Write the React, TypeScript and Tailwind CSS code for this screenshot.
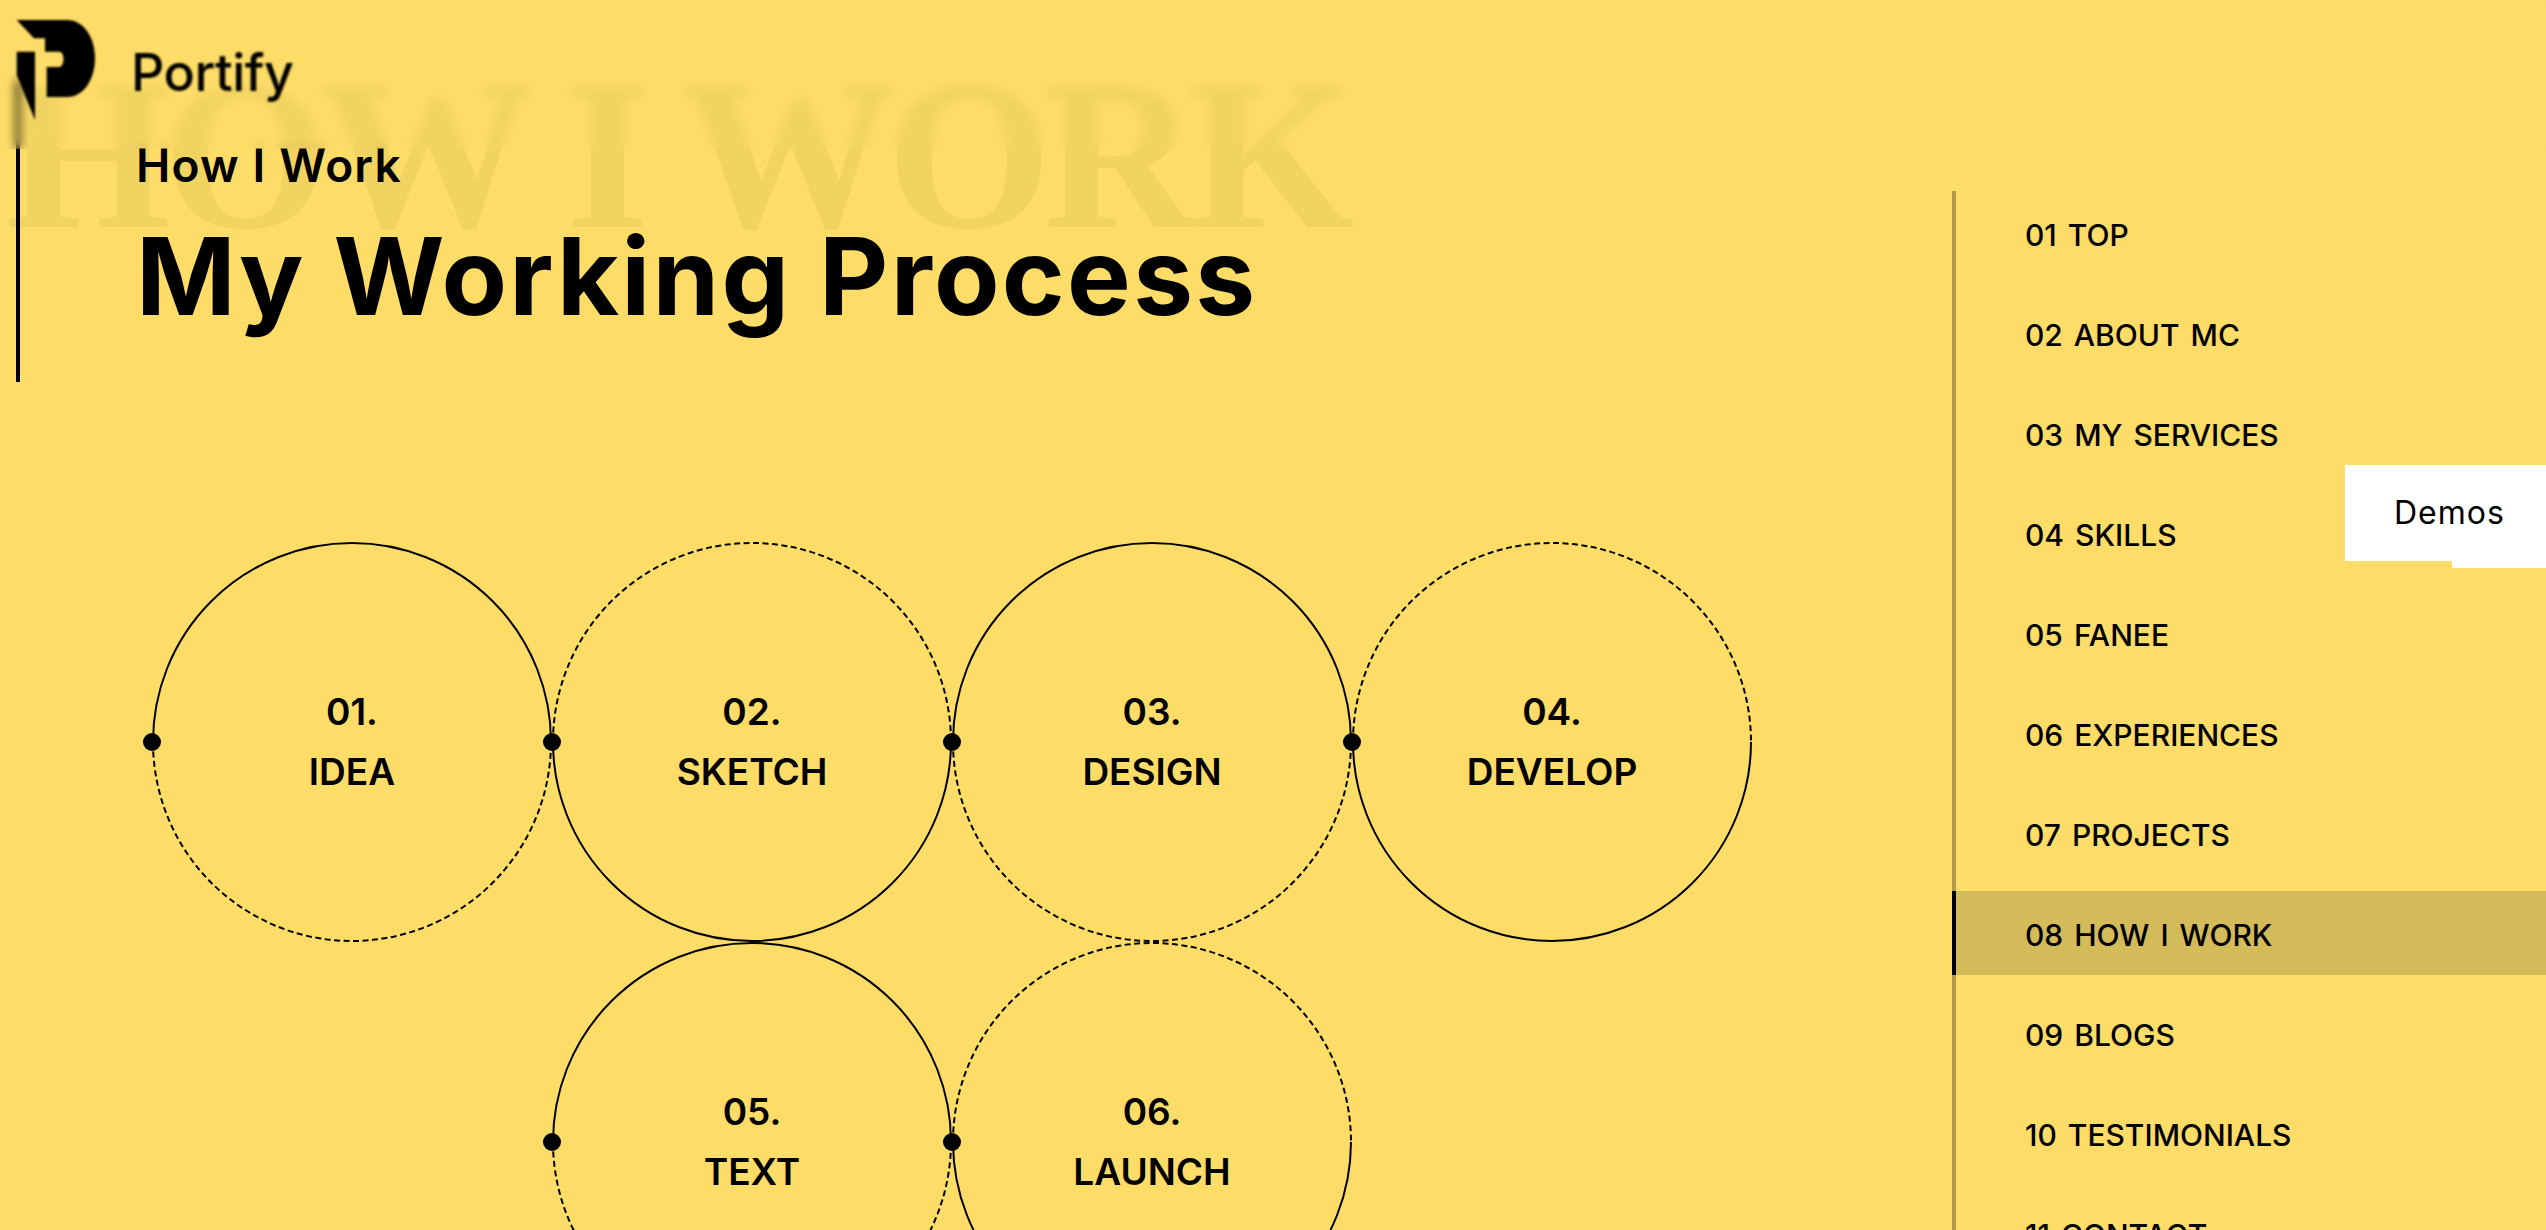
const nav = ["01 TOP","02 ABOUT MC","03 MY SERVICES","04 SKILLS","05 FANEE","06 EXPERIENCES","07 PROJECTS","08 HOW I WORK","09 BLOGS","10 TESTIMONIALS","11 CONTACT"];
const steps = [
  { n: "01.", t: "IDEA", solidTop: true, col: "" },
  { n: "02.", t: "SKETCH", solidTop: false, col: "" },
  { n: "03.", t: "DESIGN", solidTop: true, col: "" },
  { n: "04.", t: "DEVELOP", solidTop: false, col: "" },
  { n: "05.", t: "TEXT", solidTop: true, col: "col-start-2" },
  { n: "06.", t: "LAUNCH", solidTop: false, col: "" },
];
const top = "M1 200 A199 199 0 0 1 399 200";
const bottom = "M1 200 A199 199 0 0 0 399 200";

function Step({ n, t, solidTop, col }: { n: string; t: string; solidTop: boolean; col: string }) {
  return (
    <div className={`relative w-[400px] h-[400px] flex flex-col items-center justify-center text-[37px] leading-[60px] font-semibold text-black ${col}`}>
      <svg className="absolute inset-0" width="400" height="400" viewBox="0 0 400 400" fill="none" stroke="#000" strokeWidth="2">
        <path d={top} strokeDasharray={solidTop ? undefined : "6 3.5"} />
        <path d={bottom} strokeDasharray={solidTop ? "6 3.5" : undefined} />
      </svg>
      <span className="absolute left-[-9px] top-[191px] w-[18px] h-[18px] rounded-full bg-black" />
      <div>{n}</div>
      <div>{t}</div>
    </div>
  );
}

export default function App() {
  return (
    <div className="relative h-[1230px] overflow-hidden bg-[#fddc67] flex font-['Inter','Liberation_Sans',sans-serif] text-black">
      <main className="relative flex-1 min-w-0">
        <div className="absolute left-[6px] top-[50px] font-['Liberation_Serif',serif] font-bold text-[212px] leading-[212px] tracking-[-7.7px] whitespace-nowrap text-[#f0d360]">HOW I WORK</div>
        <section className="relative ml-[16px] mt-[80px] h-[302px] border-l-[4px] border-black pl-[116px] pt-[55px]">
          <p className="text-[46px] leading-[60px] font-semibold tracking-[1.2px]">How I Work</p>
          <h1 className="mt-[19px] text-[107px] leading-[124px] font-bold tracking-[2.3px] whitespace-nowrap">My Working Process</h1>
        </section>
        <div className="relative ml-[152px] mt-[160px] grid grid-cols-[repeat(4,400px)]">
          {steps.map((s) => <Step key={s.n} {...s} />)}
        </div>
      </main>
      <aside className="relative w-[594px] shrink-0 pt-[191px]">
        <ul className="flex flex-col gap-4 border-l-[4px] border-[#b09a48]">
          {nav.map((item) => {
            const active = item.startsWith("08");
            return (
              <li key={item} className={`relative h-[84px] flex items-center pl-[69px] pt-[5px] text-[30px] font-medium [word-spacing:3px] whitespace-nowrap ${active ? "bg-[#d4bb59]" : ""}`}>
                {active && <span className="absolute left-[-4px] top-0 bottom-0 w-[4px] bg-black" />}
                {item}
              </li>
            );
          })}
        </ul>
      </aside>
      <header className="absolute left-0 top-0 w-full h-[149px] backdrop-blur-[5px]">
        <div className="flex items-start">
          <svg className="ml-[10px] mt-[10px] blur-[0.8px]" width="100" height="115" viewBox="0 0 100 115" fill="#000">
            <path d="M6.7 10 H57 C74 10 85 28 85 48 C85 69 74 87 57 87 H36.7 V57 H49 C52 57 53.5 53 53.5 49 C53.5 45 52 41.7 49 41.7 H35 V28.3 H24 Z" />
            <path d="M6.7 41.7 H25 V110 L6.7 65 Z" />
          </svg>
          <span className="ml-[21px] mt-[41px] text-[52px] leading-[64px] font-medium tracking-[-0.5px] blur-[0.8px]">Portify</span>
        </div>
      </header>
      <div className="absolute right-0 top-[465px] w-[201px] h-[96px] bg-white flex items-center pl-[49px] text-[32px] tracking-[1px] text-black">
        Demos
        <span className="absolute right-0 bottom-[-7px] w-[94px] h-[7px] bg-white" />
      </div>
    </div>
  );
}
